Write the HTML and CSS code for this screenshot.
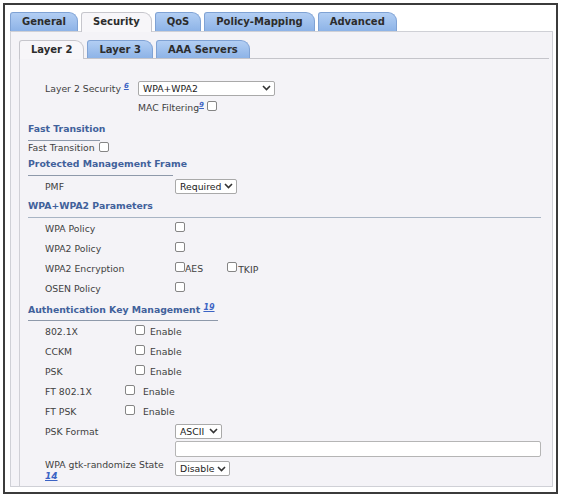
FILE: index.html
```html
<!DOCTYPE html>
<html>
<head>
<meta charset="utf-8">
<link rel="stylesheet" href="styles.css">
</head>
<body>
<div class="frame">
  <div class="tabs">
    <div class="tab">General</div>
    <div class="tab active">Security</div>
    <div class="tab">QoS</div>
    <div class="tab">Policy-Mapping</div>
    <div class="tab">Advanced</div>
  </div>
  <div class="panel">
    <div class="subtabs">
      <div class="tab sub active">Layer 2</div>
      <div class="tab sub">Layer 3</div>
      <div class="tab sub">AAA Servers</div>
    </div>
    <div class="subpanel">
      <div class="row first ind">
        <span class="lbl w93">Layer 2 Security <a class="sup">6</a></span>
        <div class="sel w137"><span>WPA+WPA2</span><svg width="9" height="6" viewBox="0 0 9 6"><path d="M1 1 L4.5 4.5 L8 1" fill="none" stroke="#333" stroke-width="1.6"/></svg></div>
      </div>
      <div class="row mac">
        <span>MAC Filtering<a class="sup">9</a></span><span class="cb ml3"></span>
      </div>

      <div class="hdr h-ft">Fast Transition</div>
      <div class="row short">
        <span>Fast Transition</span><span class="cb ml4"></span>
      </div>

      <div class="hdr h-pmf">Protected Management Frame</div>
      <div class="row ind">
        <span class="lbl w130">PMF</span>
        <div class="sel w62"><span>Required</span><svg width="9" height="6" viewBox="0 0 9 6"><path d="M1 1 L4.5 4.5 L8 1" fill="none" stroke="#333" stroke-width="1.6"/></svg></div>
      </div>

      <div class="hdr h-wpa">WPA+WPA2 Parameters</div>
      <div class="row ind"><span class="lbl w130">WPA Policy</span><span class="cb"></span></div>
      <div class="row ind"><span class="lbl w130">WPA2 Policy</span><span class="cb"></span></div>
      <div class="row ind">
        <span class="lbl w130">WPA2 Encryption</span><span class="cb"></span><span class="opt">AES</span>
        <span class="cb ml-tkip"></span><span class="opt low">TKIP</span>
      </div>
      <div class="row ind"><span class="lbl w130">OSEN Policy</span><span class="cb"></span></div>

      <div class="hdr h-akm">Authentication Key Management <a class="sup big">19</a></div>
      <div class="row ind"><span class="lbl w90">802.1X</span><span class="cb"></span><span class="en">Enable</span></div>
      <div class="row ind"><span class="lbl w90">CCKM</span><span class="cb"></span><span class="en">Enable</span></div>
      <div class="row ind"><span class="lbl w90">PSK</span><span class="cb"></span><span class="en">Enable</span></div>
      <div class="row ind"><span class="lbl w80">FT 802.1X</span><span class="cb"></span><span class="en wide">Enable</span></div>
      <div class="row ind"><span class="lbl w80">FT PSK</span><span class="cb"></span><span class="en wide">Enable</span></div>
      <div class="row ind">
        <span class="lbl w130">PSK Format</span>
        <div class="sel w47"><span>ASCII</span><svg width="9" height="6" viewBox="0 0 9 6"><path d="M1 1 L4.5 4.5 L8 1" fill="none" stroke="#333" stroke-width="1.6"/></svg></div>
      </div>
      <div class="row inrow ind">
        <span class="lbl w130"></span><div class="txt"></div>
      </div>
      <div class="row gtk ind">
        <span class="lbl w130 two">WPA gtk-randomize State<br><a class="sup big">14</a></span>
        <div class="sel w55"><span>Disable</span><svg width="9" height="6" viewBox="0 0 9 6"><path d="M1 1 L4.5 4.5 L8 1" fill="none" stroke="#333" stroke-width="1.6"/></svg></div>
      </div>
    </div>
  </div>
</div>
</body>
</html>
```

FILE: styles.css
```css
* { box-sizing: border-box; }
body {
  margin: 0;
  background: #fff;
  font-family: "DejaVu Sans", Verdana, sans-serif;
}
.frame {
  margin: 3px 0 0 3px;
  width: 555px;
  height: 491px;
  border: 2px solid #3b3b3b;
  padding: 7px 3px 0 5px;
  background: #fff;
}
.tabs, .subtabs {
  display: flex;
  gap: 3px;
  height: 19px;
  align-items: flex-end;
}
.subtabs { height: 18px; }
.tab {
  height: 19px;
  padding: 0 11px;
  border: 1px solid #7fa2d4;
  border-bottom: none;
  border-radius: 3px 9px 0 0;
  background: linear-gradient(#b2cef3, #8db3e7);
  font-weight: bold;
  font-size: 10px;
  line-height: 18px;
  color: #2c2c2c;
  white-space: nowrap;
}
.tab.active {
  background: #f7f6f9;
  border-color: #c6c6cc;
  height: 20px;
  margin-bottom: -1px;
  position: relative;
  z-index: 1;
}
.tab.sub { height: 18px; line-height: 17px; }
.tab.sub.active { height: 19px; }
.panel {
  height: 456px;
  background: #f4f3f7;
  border: 1px solid #cfd0d6;
  padding: 8px 3px 0 8px;
}
.subpanel {
  height: 428px;
  border-top: 1px solid #c4c4ca;
  border-left: 1px solid #d0d0d6;
  padding: 19px 0 0 8px;
  font-size: 9.3px;
  color: #3f3f3f;
}
.row {
  display: flex;
  align-items: center;
  height: 20px;
  white-space: nowrap;
}
.row.mac { height: 18px; padding-left: 110px; }
.row.short { height: 13px; }
.ind { padding-left: 17px; }
.lbl { flex: none; }
.w93 { width: 93px; }
.w130 { width: 130px; }
.w90 { width: 90px; }
.w80 { width: 80px; }
.sup {
  color: #3b63c4;
  text-decoration: underline;
  font-size: 7px;
  font-weight: bold;
  font-style: italic;
  vertical-align: 4px;
}
.sup.big { font-size: 8px; }
.hdr {
  font-weight: bold;
  color: #41619b;
  line-height: 14px;
  padding-bottom: 4px;
  border-bottom: 1px solid #8e99aa;
  white-space: nowrap;
}
.h-ft { width: 72px; margin-top: 6px; }
.h-pmf { width: 145px; margin-top: 3px; }
.h-wpa { width: 513px; margin-top: 3px; border-bottom-color: #a8b4c4; }
.h-akm { width: 190px; margin-top: 3px; padding-bottom: 3px; }
.h-akm .sup { vertical-align: 3px; }
.cb {
  flex: none;
  width: 10px;
  height: 10px;
  border: 1px solid #858585;
  border-radius: 2px;
  background: #fff;
  margin-top: -2px;
}
.ml3 { margin-left: 3px; }
.ml4 { margin-left: 4px; }
.ml-tkip { margin-left: 24px; }
.opt { margin-left: 0; }
.opt.low { margin-left: 1px; margin-top: 3px; }
.en { margin-left: 5px; margin-top: 1px; }
.en.wide { margin-left: 8px; }
.sel {
  flex: none;
  display: flex;
  align-items: center;
  justify-content: space-between;
  height: 15px;
  border: 1px solid #a9a9a9;
  border-radius: 2px;
  background: #fff;
  padding: 0 3px 0 4px;
  color: #222;
}
.w137 { width: 137px; }
.w62 { width: 62px; }
.w47 { width: 47px; }
.w55 { width: 55px; }
.inrow { height: 18px; align-items: flex-start; }
.txt {
  width: 366px;
  height: 16px;
  border: 1px solid #b5b5b5;
  border-radius: 2px;
  background: #fff;
}
.gtk { height: 22px; margin-top: 0; align-items: flex-start; }
.two { line-height: 11px; }
.gtk .sel { margin-top: 2px; }
.gtk .sup { vertical-align: 0; font-size: 9px; }
```
